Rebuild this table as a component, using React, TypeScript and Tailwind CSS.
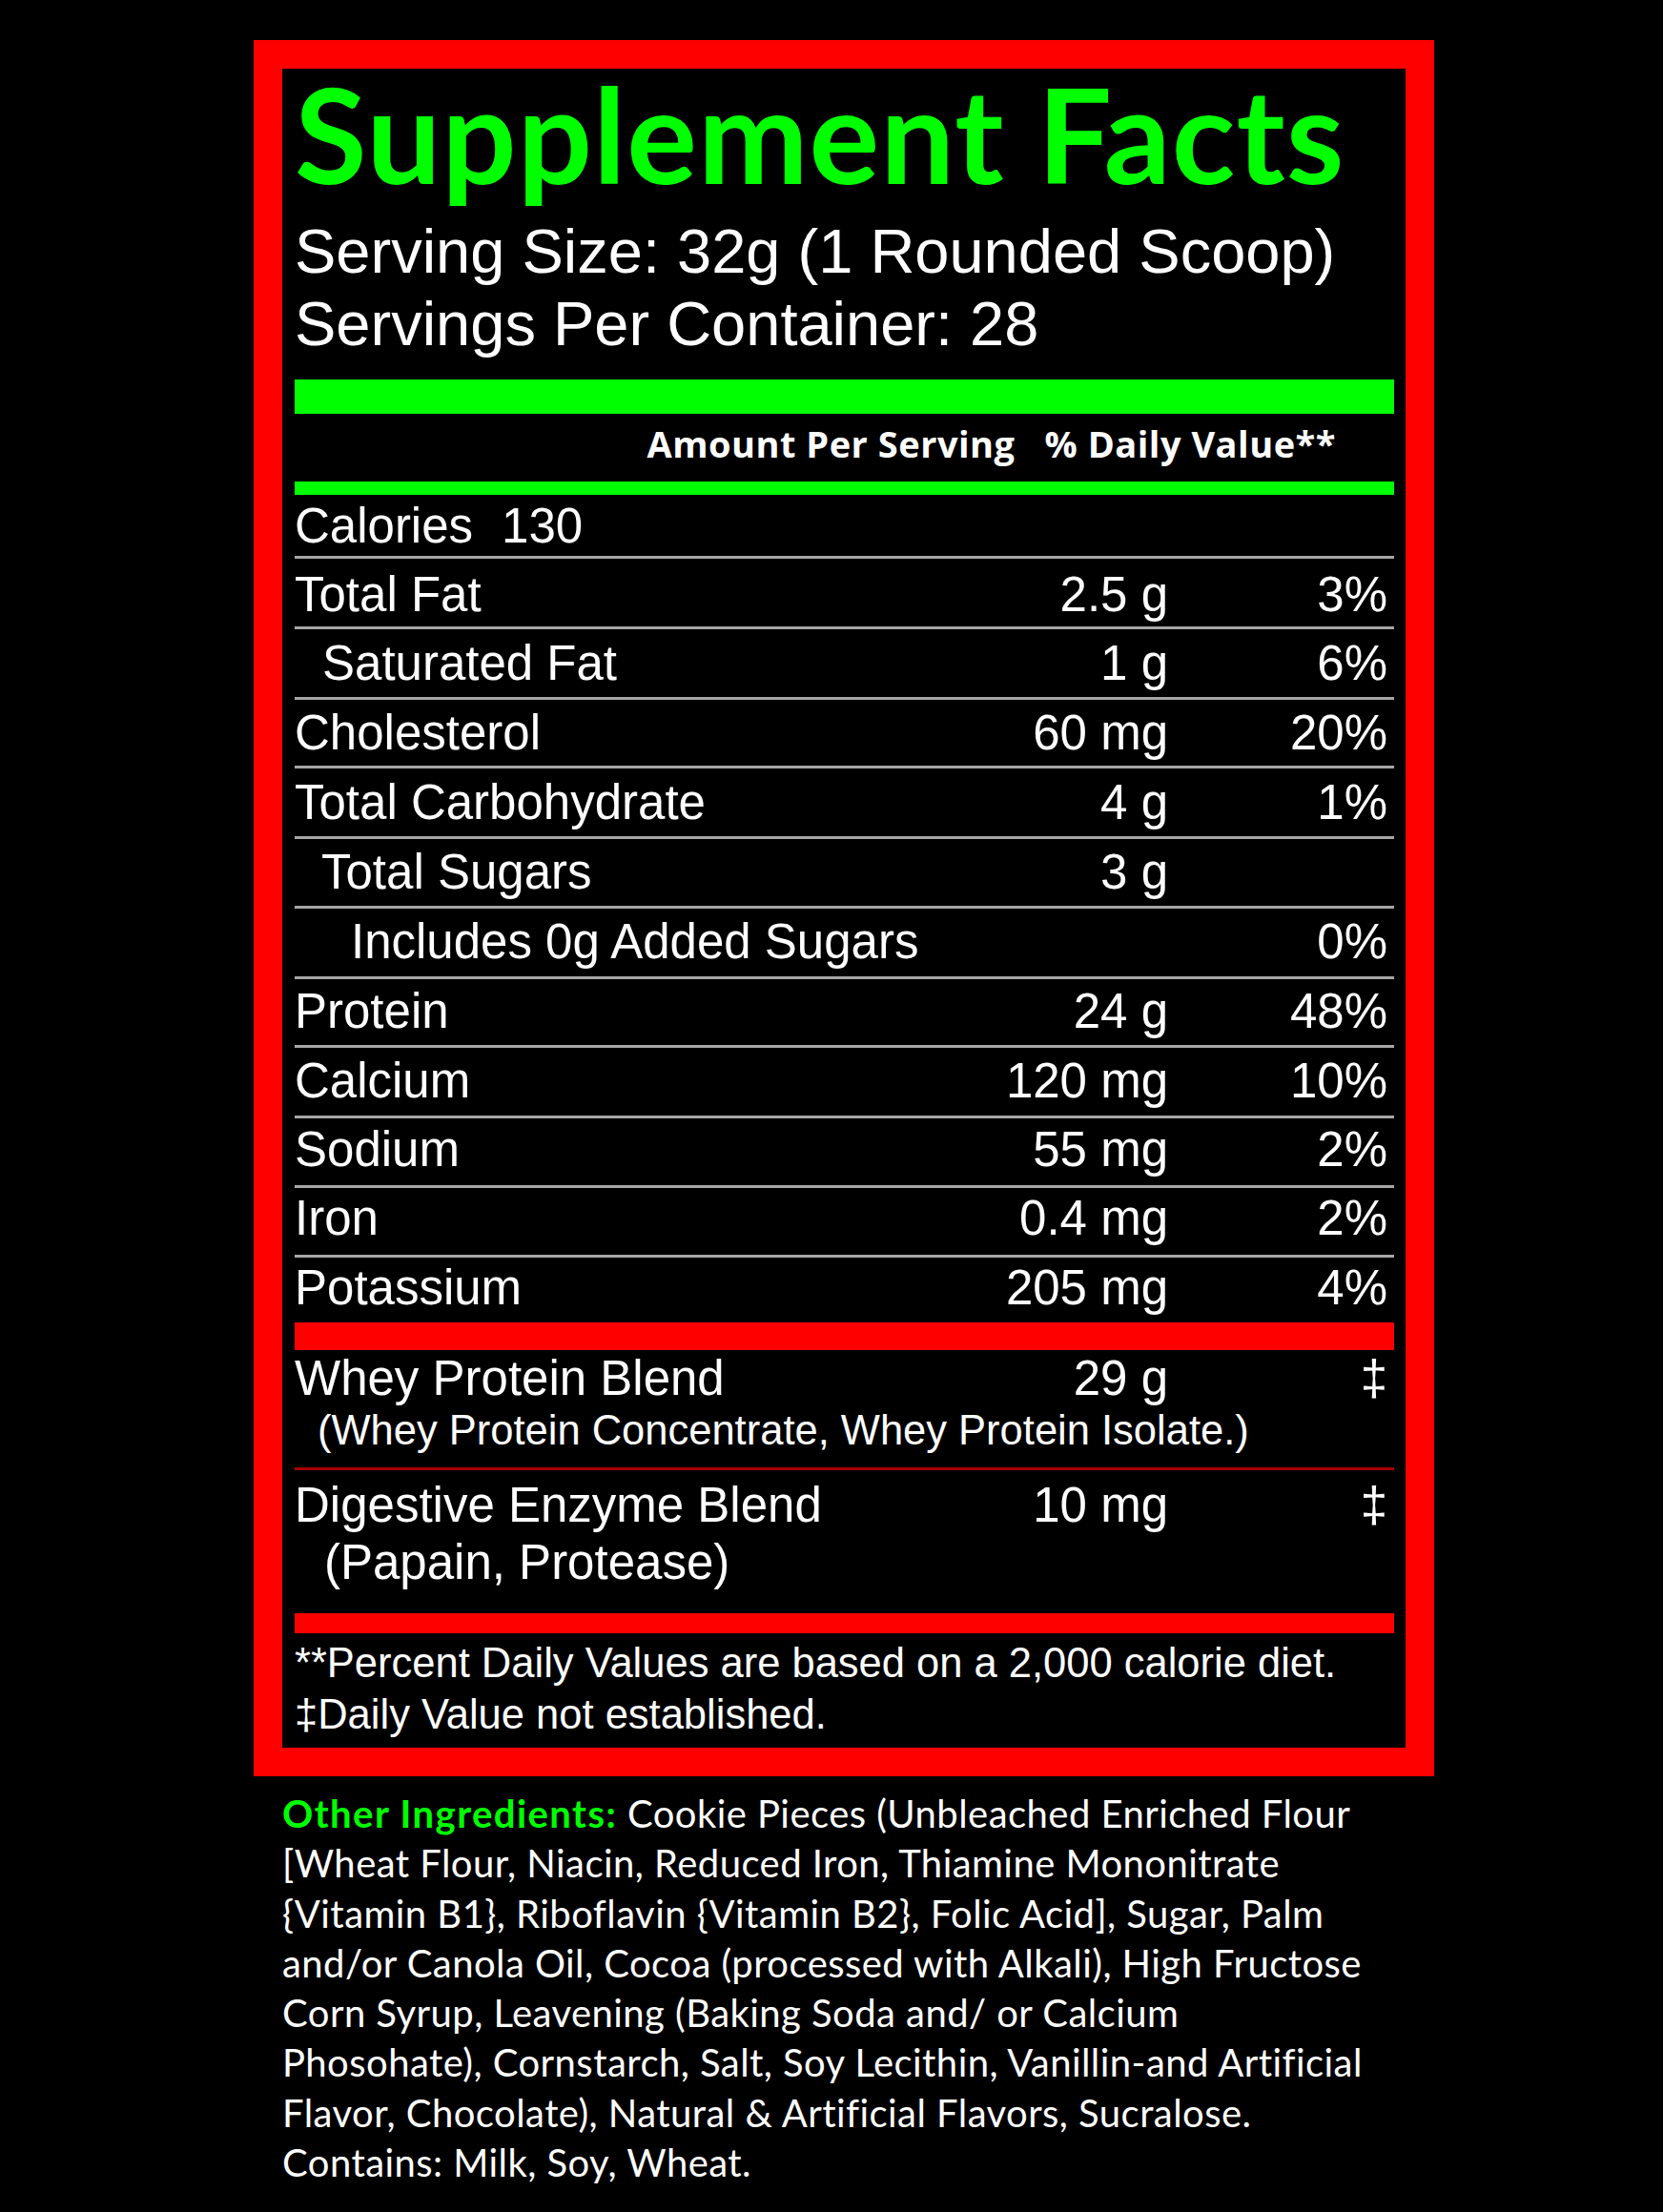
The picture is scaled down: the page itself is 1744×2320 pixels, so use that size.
const helv = { fontFamily: '"Liberation Sans", Arial, sans-serif' }

type Row = {
    name: string
    amount?: string
    pct?: string
    indent: string
    h: string
    pt: string
    last?: boolean
}

const rows: Row[] = [
    { name: 'Total Fat', amount: '2.5 g', pct: '3%', indent: 'pl-0', h: 'h-[74px]', pt: 'pt-[12px]' },
    { name: 'Saturated Fat', amount: '1 g', pct: '6%', indent: 'pl-[29px]', h: 'h-[74px]', pt: 'pt-[10px]' },
    { name: 'Cholesterol', amount: '60 mg', pct: '20%', indent: 'pl-0', h: 'h-[72px]', pt: 'pt-[9px]' },
    { name: 'Total Carbohydrate', amount: '4 g', pct: '1%', indent: 'pl-0', h: 'h-[74px]', pt: 'pt-[10px]' },
    { name: 'Total Sugars', amount: '3 g', indent: 'pl-[28px]', h: 'h-[73px]', pt: 'pt-[9px]' },
    { name: 'Includes 0g Added Sugars', pct: '0%', indent: 'pl-[59px]', h: 'h-[74px]', pt: 'pt-[9px]' },
    { name: 'Protein', amount: '24 g', pct: '48%', indent: 'pl-0', h: 'h-[72px]', pt: 'pt-[8px]' },
    { name: 'Calcium', amount: '120 mg', pct: '10%', indent: 'pl-0', h: 'h-[74px]', pt: 'pt-[9px]' },
    { name: 'Sodium', amount: '55 mg', pct: '2%', indent: 'pl-0', h: 'h-[73px]', pt: 'pt-[7px]' },
    { name: 'Iron', amount: '0.4 mg', pct: '2%', indent: 'pl-0', h: 'h-[73px]', pt: 'pt-[6px]' },
    { name: 'Potassium', amount: '205 mg', pct: '4%', indent: 'pl-0', h: 'h-[68px]', pt: 'pt-[6px]', last: true },
]

const ingredientLines = [
    '[Wheat Flour, Niacin, Reduced Iron, Thiamine Mononitrate',
    '{Vitamin B1}, Riboflavin {Vitamin B2}, Folic Acid], Sugar, Palm',
    'and/or Canola Oil, Cocoa (processed with Alkali), High Fructose',
    'Corn Syrup, Leavening (Baking Soda and/ or Calcium',
    'Phosohate), Cornstarch, Salt, Soy Lecithin, Vanillin-and Artificial',
    'Flavor, Chocolate), Natural & Artificial Flavors, Sucralose.',
    'Contains: Milk, Soy, Wheat.',
]

const FactRow = ({ row }: { row: Row }) => (
    <div className={`flex ${row.h} ${row.pt} ${row.last ? '' : 'border-b-[3px] border-[#a6a6a6]'} text-[51px] leading-[51px] text-white`}>
        <div className={`flex-1 ${row.indent}`}>{row.name}</div>
        <div className="text-right">{row.amount}</div>
        <div className="w-[237px] pr-[7px] text-right">{row.pct}</div>
    </div>
)

const App = () => {
    return (
        <div className="min-h-[2320px] w-[1744px] bg-black pl-[266px] pt-[42px]" style={helv}>
            {/* label box */}
            <div className="w-[1238px] border-[30px] border-[#ff0000] bg-black pl-[13px] pr-[12px]">
                <h1 className="pt-[3px] text-[138px] font-bold leading-[130px] tracking-[1px] text-[#00ff00]" style={{ fontFamily: 'Lato, sans-serif' }}>
                    Supplement Facts
                </h1>
                <div className="mt-[21px] text-[65px] leading-[76px] text-white">
                    <div>Serving Size: 32g (1 Rounded Scoop)</div>
                    <div>Servings Per Container: 28</div>
                </div>
                <div className="mt-[20px] h-[36px] bg-[#00ff00]"></div>
                <div className="flex h-[71px] justify-end gap-[31px] pr-[61px] pt-[13px] text-[38px] font-bold leading-[36px] tracking-[0.5px] text-white" style={{ fontFamily: '"Open Sans", sans-serif' }}>
                    <span>Amount Per Serving</span>
                    <span>% Daily Value**</span>
                </div>
                <div className="h-[14px] bg-[#00ff00]"></div>

                <div className="h-[67px] border-b-[3px] border-[#a6a6a6] pt-[7px] text-[51px] leading-[51px] text-white">
                    Calories<span className="ml-[30px]">130</span>
                </div>
                {rows.map((row) => (
                    <FactRow key={row.name} row={row} />
                ))}
                <div className="h-[29px] bg-[#ff0000]"></div>

                {/* blends */}
                <div className="h-[126px] border-b-[3px] border-[#a80000] pt-[4px] text-white">
                    <div className="flex text-[51px] leading-[51px]">
                        <div className="flex-1">Whey Protein Blend</div>
                        <div className="text-right">29 g</div>
                        <div className="w-[237px] pr-[7px] text-right">‡</div>
                    </div>
                    <div className="pl-[24px] pt-[8px] text-[43.5px] leading-[43px]">(Whey Protein Concentrate, Whey Protein Isolate.)</div>
                </div>
                <div className="h-[150px] pt-[7px] text-[51px] leading-[60px] text-white">
                    <div className="flex">
                        <div className="flex-1">Digestive Enzyme Blend</div>
                        <div className="text-right">10 mg</div>
                        <div className="w-[237px] pr-[7px] text-right">‡</div>
                    </div>
                    <div className="pl-[31px]">(Papain, Protease)</div>
                </div>
                <div className="h-[21px] bg-[#ff0000]"></div>
                <div className="h-[120px] pt-[4px] text-[43.5px] leading-[54px] text-white">
                    <div>**Percent Daily Values are based on a 2,000 calorie diet.</div>
                    <div>‡Daily Value not established.</div>
                </div>
            </div>

            {/* other ingredients */}
            <div className="mt-[13px] pl-[30px] text-[40px] leading-[52.3px] tracking-[0.45px] text-white" style={{ fontFamily: 'Lato, sans-serif' }}>
                <div>
                    <span className="font-bold tracking-[1.45px] text-[#00ff00]">Other Ingredients:</span> Cookie Pieces (Unbleached Enriched Flour
                </div>
                {ingredientLines.map((line) => (
                    <div key={line}>{line}</div>
                ))}
            </div>
        </div>
    )
}
export default App
